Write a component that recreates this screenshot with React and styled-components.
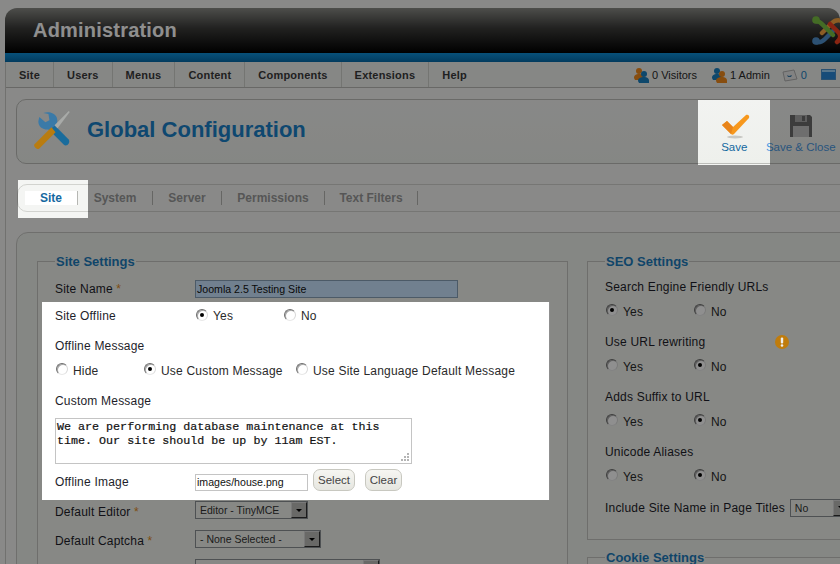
import React from 'react'
import styled, { createGlobalStyle } from 'styled-components'

const GlobalStyle = createGlobalStyle`
  html, body {
    margin: 0;
    padding: 0;
    background: #f4f5f3;
  }
  body {
    font-family: "Liberation Sans", Arial, sans-serif;
    font-size: 12px;
    color: #2a2a2a;
  }
`

const Page = styled.div`
  position: relative;
  width: 840px;
  height: 564px;
  overflow: hidden;
  box-sizing: border-box;
  padding: 8px 0 0 5px;
  background: #f4f5f3;
`

// the dimmed sheet over the page, with the three highlighted areas cut out
const Dim = styled.div`
  position: absolute;
  inset: 0;
  z-index: 1;
  background: rgba(0, 0, 0, 0.44);
  clip-path: path(evenodd, 'M0 0H840V564H0Z M42 302H549V500H42Z M698 100H770V165H698Z M18 180H88V218H18Z');
`

const Raised = styled.span`
  position: relative;
  z-index: 2;
  display: block;
  flex-shrink: 0;
  line-height: 0;
`

const ToolsWrap = styled(Raised)`
  margin-bottom: 5px;
`

const Header = styled.header`
  display: flex;
  align-items: center;
  height: 45px;
  padding-left: 28px;
  overflow: hidden;
  border-radius: 12px 12px 0 0;
  background: linear-gradient(#8a8b86, #3c3c3a 45%, #000);
`

const Brand = styled.h1`
  margin: 0;
  font-size: 20px;
  font-weight: 700;
  letter-spacing: 0.2px;
  color: #fff;
`

const Logo = styled.svg`
  flex-shrink: 0;
  margin-left: auto;
  margin-right: -14px;
`

const BlueBar = styled.div`
  height: 9px;
  background: linear-gradient(#0e90d8, #056aa8);
`

const Shell = styled.div`
  border-left: 1px solid #c9cac6;
  height: 510px;
`

const MenuBar = styled.nav`
  display: flex;
  align-items: center;
  height: 25px;
  border-bottom: 1px solid #b9bab6;
  background: #eff0ee;
`

const MenuItem = styled.a`
  display: flex;
  align-items: center;
  height: 100%;
  padding: 0 13px;
  border-right: 1px solid #cfd0cc;
  font-size: 11px;
  font-weight: 700;
  letter-spacing: 0.2px;
  color: #3a3a3a;
  &:last-of-type {
    border-right: 0;
  }
`

const Status = styled.div`
  display: flex;
  align-items: center;
  margin-left: auto;
  width: 206px;
  flex-shrink: 0;
`

const StatusItem = styled.span`
  display: flex;
  align-items: center;
  gap: 3px;
  margin-right: ${(p) => p.$gap}px;
  color: ${(p) => p.$color || '#2a2a2a'};
  font-size: 11px;
  white-space: nowrap;
`

const TitleBox = styled.section`
  display: flex;
  align-items: center;
  box-sizing: border-box;
  height: 65px;
  margin: 11px -20px 0 10px;
  padding-left: 15px;
  border: 1px solid #bdbeba;
  border-radius: 10px;
  background: linear-gradient(#f2f3f1, #eef0ec);
`

const PageTitle = styled.h2`
  margin: 0 0 3px 15px;
  font-size: 22px;
  font-weight: 700;
  color: #1a80c8;
`

const Toolbar = styled.div`
  display: flex;
  margin: 0 0 6px 393px;
`

const ToolButton = styled.a`
  display: flex;
  flex-direction: column;
  align-items: center;
  width: ${(p) => p.$width}px;
  font-size: 11.5px;
  white-space: nowrap;
  color: ${(p) => p.$color};
  svg {
    display: block;
    height: 36px;
  }
`

const Tabs = styled.div`
  display: flex;
  align-items: center;
  box-sizing: border-box;
  height: 28px;
  margin: 20px -20px 0 11px;
  padding-left: 7px;
  border: 1px solid #d2d3cf;
  border-radius: 10px;
`

const Tab = styled.a`
  display: flex;
  align-items: center;
  justify-content: center;
  box-sizing: border-box;
  width: ${(p) => p.$width}px;
  height: 14px;
  border-right: 1px solid #b6b7b3;
  font-size: 12px;
  font-weight: 700;
  color: ${(p) => (p.$active ? '#14689f' : '#9a9a9a')};
  background: ${(p) => (p.$active ? '#fff' : 'transparent')};
`

const Panel = styled.main`
  display: grid;
  grid-template-columns: 531px 273px;
  column-gap: 19px;
  align-items: start;
  box-sizing: border-box;
  height: 360px;
  margin: 20px -20px 0 10px;
  padding: 20px 0 0 20px;
  border: 1px solid #c6c7c3;
  border-radius: 12px 12px 0 0;
  background: #eef0ec;
`

const Column = styled.div`
  display: flex;
  flex-direction: column;
`

const Fieldset = styled.fieldset`
  box-sizing: border-box;
  min-width: 0;
  margin: ${(p) => p.$top || 0}px 0 0;
  padding: ${(p) => p.$pad}px 0 ${(p) => p.$bottom || 0}px 17px;
  border: 1px solid #c4c5c1;
  background: #f1f3ee;
`

const Legend = styled.legend`
  height: 16px;
  line-height: 18px;
  margin: 0;
  padding: 0 1px;
  font-size: 13px;
  font-weight: 700;
  color: #1c7cbc;
`

const Row = styled.div`
  display: flex;
  align-items: center;
  height: ${(p) => p.$h}px;
`

const CaptionRow = styled(Row)`
  box-sizing: border-box;
  padding-top: 4px;
`

const Spotlight = styled.div`
  margin: 0 17px 0 -13px;
  padding-left: 13px;
  height: 198px;
  background: #fff;
`

const Label = styled.label`
  flex-shrink: 0;
  width: ${(p) => (p.$wide ? 'auto' : '140px')};
  letter-spacing: 0.2px;
  color: #1e1e2a;
  white-space: nowrap;
`

const Star = styled.span`
  color: #e08a1c;
`

const Option = styled.span`
  display: flex;
  align-items: center;
  flex-shrink: 0;
  width: ${(p) => (p.$width ? `${p.$width}px` : 'auto')};
  letter-spacing: 0.2px;
  white-space: nowrap;
`

const Radio = styled.span`
  position: relative;
  flex-shrink: 0;
  box-sizing: border-box;
  width: 12px;
  height: 12px;
  margin: -3px 5px 0 1px;
  border: 1px solid;
  border-color: #6e6e6e #d8d8d8 #e8e8e8 #6e6e6e;
  border-radius: 50%;
  background: #fff;
  box-shadow: inset 1px 1px 0 #a8a8a8;
  &::after {
    content: '';
    display: ${(p) => (p.$on ? 'block' : 'none')};
    width: 4px;
    height: 4px;
    margin: 3px;
    border-radius: 50%;
    background: #000;
  }
`

const TextInput = styled.div`
  box-sizing: border-box;
  width: ${(p) => p.$width}px;
  height: ${(p) => p.$height}px;
  padding: 0 1px;
  line-height: ${(p) => p.$height - 2}px;
  font-size: 10.6px;
  color: #111;
  border: 1px solid ${(p) => (p.$active ? '#88a0b8' : '#c4c4c4')};
  background: ${(p) => (p.$active ? '#c9e4ff' : '#fff')};
`

const MessageWrap = styled.div`
  position: relative;
  width: 357px;
  height: 46px;
`

const Message = styled.textarea`
  display: block;
  box-sizing: border-box;
  width: 100%;
  height: 100%;
  margin: 0;
  padding: 1px 1px;
  font-family: "Liberation Mono", "Courier New", monospace;
  font-size: 11.7px;
  line-height: 14px;
  color: #111;
  -webkit-text-stroke: 0.2px #111;
  border: 1px solid #c4c4c4;
  background: #fff;
  outline: none;
  resize: none;
`

const Grip = styled.svg`
  position: absolute;
  right: 2px;
  bottom: 2px;
`

const Button = styled.button`
  box-sizing: border-box;
  width: ${(p) => p.$width}px;
  height: 22px;
  margin: -4px 5px 0 0;
  padding: 0;
  font-family: inherit;
  font-size: 11.5px;
  color: #444;
  border: 1px solid #c8c8c0;
  border-radius: 7px;
  background: linear-gradient(#f6f6f2, #e6e6e0);
`

const ImageField = styled.div`
  display: flex;
  align-items: center;
  gap: 5px;
`

const Select = styled.div`
  display: flex;
  align-items: center;
  justify-content: space-between;
  flex-shrink: 0;
  align-self: ${(p) => (p.$top === undefined ? 'center' : 'flex-start')};
  box-sizing: border-box;
  width: ${(p) => p.$width}px;
  height: 18px;
  margin-top: ${(p) => p.$top || 0}px;
  padding-left: 4px;
  font-size: 10.5px;
  color: #333;
  border: 1px solid #8c9094;
  background: #f1f3ee;
`

const SelectArrow = styled.span`
  display: flex;
  align-items: center;
  justify-content: center;
  width: 16px;
  height: 16px;
  border: 1px solid;
  box-sizing: border-box;
  border-color: #d8d8d8 #303030 #303030 #d8d8d8;
  background: #bcbcb8;
  &::after {
    content: '';
    border: 3px solid transparent;
    border-top: 3px solid #000;
    border-bottom: 0;
    border-left-width: 3.5px;
    border-right-width: 3.5px;
  }
`

const Group = styled.div`
  height: 55px;
`

const SmallLabel = styled(Label)`
  margin-right: 5px;
`

function People({ front, back }) {
  return (
    <svg width="15" height="16" viewBox="0 0 15 16">
      <circle cx="5" cy="4" r="3" fill={back} />
      <path d="M0 11c0-3 2-4 5-4s5 1 5 4v2H1z" fill={back} />
      <circle cx="10" cy="7" r="3" fill={front} />
      <path d="M4 14c0-3 3-4 6-4s5 1 5 4v2H5z" fill={front} />
    </svg>
  )
}

function ToolsIcon() {
  return (
    <ToolsWrap>
      <svg width="40" height="39" viewBox="3 0 37 38.5">
        <path d="M18 19l5-5 15 15c2 3-2 8-5 5z" fill="#1a6c9c" />
        <path d="M20 19C13 20 8 17 8 11l1-4 6 5 4-2-1-6-5-1c5-2 11 0 13 4 1 3 1 5 0 7z" fill="#3a7aa8" />
        <path d="M24 15L38 1l1 1-12 16z" fill="#a8aaa8" />
        <path d="M21 17l4 5-16 16c-2 2-6-2-5-4z" fill="#b97c10" />
      </svg>
    </ToolsWrap>
  )
}

function YesNo({ yes }) {
  return (
    <Row $h={25}>
      <Option $width={88}>
        <Radio $on={yes} />
        Yes
      </Option>
      <Option>
        <Radio $on={!yes} />
        No
      </Option>
    </Row>
  )
}

export default function App() {
  return (
    <Page>
      <GlobalStyle />
      <Header>
        <Brand>Administration</Brand>
        <Logo width="42" height="32" viewBox="0 0 42 32" fill="none" strokeWidth="4.5" strokeLinecap="round">
          <path d="M4 27c4 1 7-1 9-3L22 15" stroke="#5091cd" />
          <circle cx="4" cy="26" r="3.8" fill="#5091cd" />
          <path d="M10 18L20 8c3-3 7-3 10-2l4 0" stroke="#f9a541" />
          <path d="M4 6c4 0 6 3 8 5l9 9" stroke="#7ac143" />
          <circle cx="4" cy="5" r="3.8" fill="#7ac143" />
          <path d="M18 9l9 9c2 3 2 6-2 9" stroke="#f44321" />
        </Logo>
      </Header>
      <BlueBar />
      <Shell>
        <MenuBar>
          <MenuItem>Site</MenuItem>
          <MenuItem>Users</MenuItem>
          <MenuItem>Menus</MenuItem>
          <MenuItem>Content</MenuItem>
          <MenuItem>Components</MenuItem>
          <MenuItem>Extensions</MenuItem>
          <MenuItem>Help</MenuItem>
          <Status>
            <StatusItem $gap={15}>
              <People front="#1a80c0" back="#f08a1c" />
              0 Visitors
            </StatusItem>
            <StatusItem $gap={12}>
              <People front="#f08a1c" back="#1a80c0" />
              1 Admin
            </StatusItem>
            <StatusItem $gap={14} $color="#1a80c0">
              <svg width="16" height="14" viewBox="0 0 16 14">
                <path d="M1 4l11-2 3 9-12 2z" fill="#e8e8e8" stroke="#b0b0b0" />
                <path d="M5 7l2 1 3-1-1 2H6z" fill="#3a7aa8" />
              </svg>
              0
            </StatusItem>
            <svg width="15" height="11" viewBox="0 0 15 11">
              <rect width="15" height="11" fill="#2a88d8" stroke="#6a9ac0" />
              <rect x="1" y="1" width="13" height="2" fill="#9ad0f8" />
            </svg>
          </Status>
        </MenuBar>

        <TitleBox>
          <ToolsIcon />
          <PageTitle>Global Configuration</PageTitle>
          <Toolbar>
            <ToolButton $width={71} $color="#14689f">
              <svg width="32" height="36" viewBox="-2 -5 32 36">
                <ellipse cx="15" cy="27" rx="8" ry="1.5" fill="#c8c8c4" />
                <path d="M2 15l5-4 6 6L26 5c2-1 4 1 3 3L14 24c-1 1-2 1-3 0z" fill="#f7981d" />
                <path d="M2 15l5-4 6 6-2 7z" fill="#e8841a" />
              </svg>
              Save
            </ToolButton>
            <ToolButton $width={62} $color="#4a98e0">
              <svg width="24" height="36" viewBox="0 -3 24 36">
                <path d="M1 7h20l2 2v20H1z" fill="#6c6c6c" />
                <rect x="6" y="7" width="12" height="7" fill="#a8a8a8" />
                <rect x="13" y="8" width="3" height="5" fill="#6c6c6c" />
                <rect x="4" y="18" width="16" height="11" fill="#c4c4c4" />
              </svg>
              Save &amp; Close
            </ToolButton>
          </Toolbar>
        </TitleBox>

        <Tabs>
          <Tab $active $width={53}>
            Site
          </Tab>
          <Tab $width={75}>System</Tab>
          <Tab $width={69}>Server</Tab>
          <Tab $width={103}>Permissions</Tab>
          <Tab $width={93}>Text Filters</Tab>
        </Tabs>

        <Panel>
          <Fieldset $pad={6}>
            <Legend>Site Settings</Legend>
            <Row $h={27}>
              <Label>
                Site Name <Star>*</Star>
              </Label>
              <TextInput $active $width={263} $height={18}>
                Joomla 2.5 Testing Site
              </TextInput>
            </Row>
            <Spotlight>
              <Row $h={28}>
                <Label>Site Offline</Label>
                <Option $width={88}>
                  <Radio $on />
                  Yes
                </Option>
                <Option>
                  <Radio />
                  No
                </Option>
              </Row>
              <Row $h={31}>
                <Label>Offline Message</Label>
              </Row>
              <Row $h={19}>
                <Option $width={88}>
                  <Radio />
                  Hide
                </Option>
                <Option $width={152}>
                  <Radio $on />
                  Use Custom Message
                </Option>
                <Option>
                  <Radio />
                  Use Site Language Default Message
                </Option>
              </Row>
              <CaptionRow $h={38}>
                <Label>Custom Message</Label>
              </CaptionRow>
              <MessageWrap>
                <Message
                  readOnly
                  defaultValue={'We are performing database maintenance at this time. Our site should be up by 11am EST.'}
                />
                <Grip width="10" height="10" viewBox="0 0 10 10" fill="#b4b4b4">
                  <rect x="7" y="1" width="2" height="2" />
                  <rect x="4" y="4" width="2" height="2" />
                  <rect x="7" y="4" width="2" height="2" />
                  <rect x="1" y="7" width="2" height="2" />
                  <rect x="4" y="7" width="2" height="2" />
                  <rect x="7" y="7" width="2" height="2" />
                </Grip>
              </MessageWrap>
              <Row $h={36}>
                <Label>Offline Image</Label>
                <ImageField>
                  <TextInput $width={113} $height={17}>
                    images/house.png
                  </TextInput>
                  <Button $width={42}>Select</Button>
                  <Button $width={37}>Clear</Button>
                </ImageField>
              </Row>
            </Spotlight>
            <Row $h={24}>
              <Label>
                Default Editor <Star>*</Star>
              </Label>
              <Select $width={113} $top={1}>
                Editor - TinyMCE
                <SelectArrow />
              </Select>
            </Row>
            <Row $h={34}>
              <Label>
                Default Captcha <Star>*</Star>
              </Label>
              <Select $width={126} $top={6}>
                - None Selected -
                <SelectArrow />
              </Select>
            </Row>
            <Row $h={32}>
              <Label>Default Access Level</Label>
              <Select $width={185} $top={1}>
                Public
                <SelectArrow />
              </Select>
            </Row>
          </Fieldset>

          <Column>
            <Fieldset $pad={5} $bottom={18}>
              <Legend>SEO Settings</Legend>
              <Group>
                <Row $h={25}>
                  <Label $wide>Search Engine Friendly URLs</Label>
                </Row>
                <YesNo yes />
              </Group>
              <Group>
                <Row $h={25}>
                  <Label>Use URL rewriting</Label>
                  <Raised>
                    <svg width="14" height="14" viewBox="0 0 14 14" style={{ marginLeft: 30 }}>
                      <circle cx="7" cy="7" r="7" fill="#c07c0c" />
                      <rect x="5.8" y="2.5" width="2.4" height="6" rx="1" fill="#eee" />
                      <circle cx="7" cy="10.5" r="1.3" fill="#eee" />
                    </svg>
                  </Raised>
                </Row>
                <YesNo />
              </Group>
              <Group>
                <Row $h={25}>
                  <Label>Adds Suffix to URL</Label>
                </Row>
                <YesNo />
              </Group>
              <Group>
                <Row $h={25}>
                  <Label>Unicode Aliases</Label>
                </Row>
                <YesNo />
              </Group>
              <Row $h={27}>
                <SmallLabel $wide>Include Site Name in Page Titles</SmallLabel>
                <Select $width={60}>
                  No
                  <SelectArrow />
                </Select>
              </Row>
            </Fieldset>
            <Fieldset $pad={0} $top={9}>
              <Legend>Cookie Settings</Legend>
            </Fieldset>
          </Column>
        </Panel>
      </Shell>
      <Dim />
    </Page>
  )
}
